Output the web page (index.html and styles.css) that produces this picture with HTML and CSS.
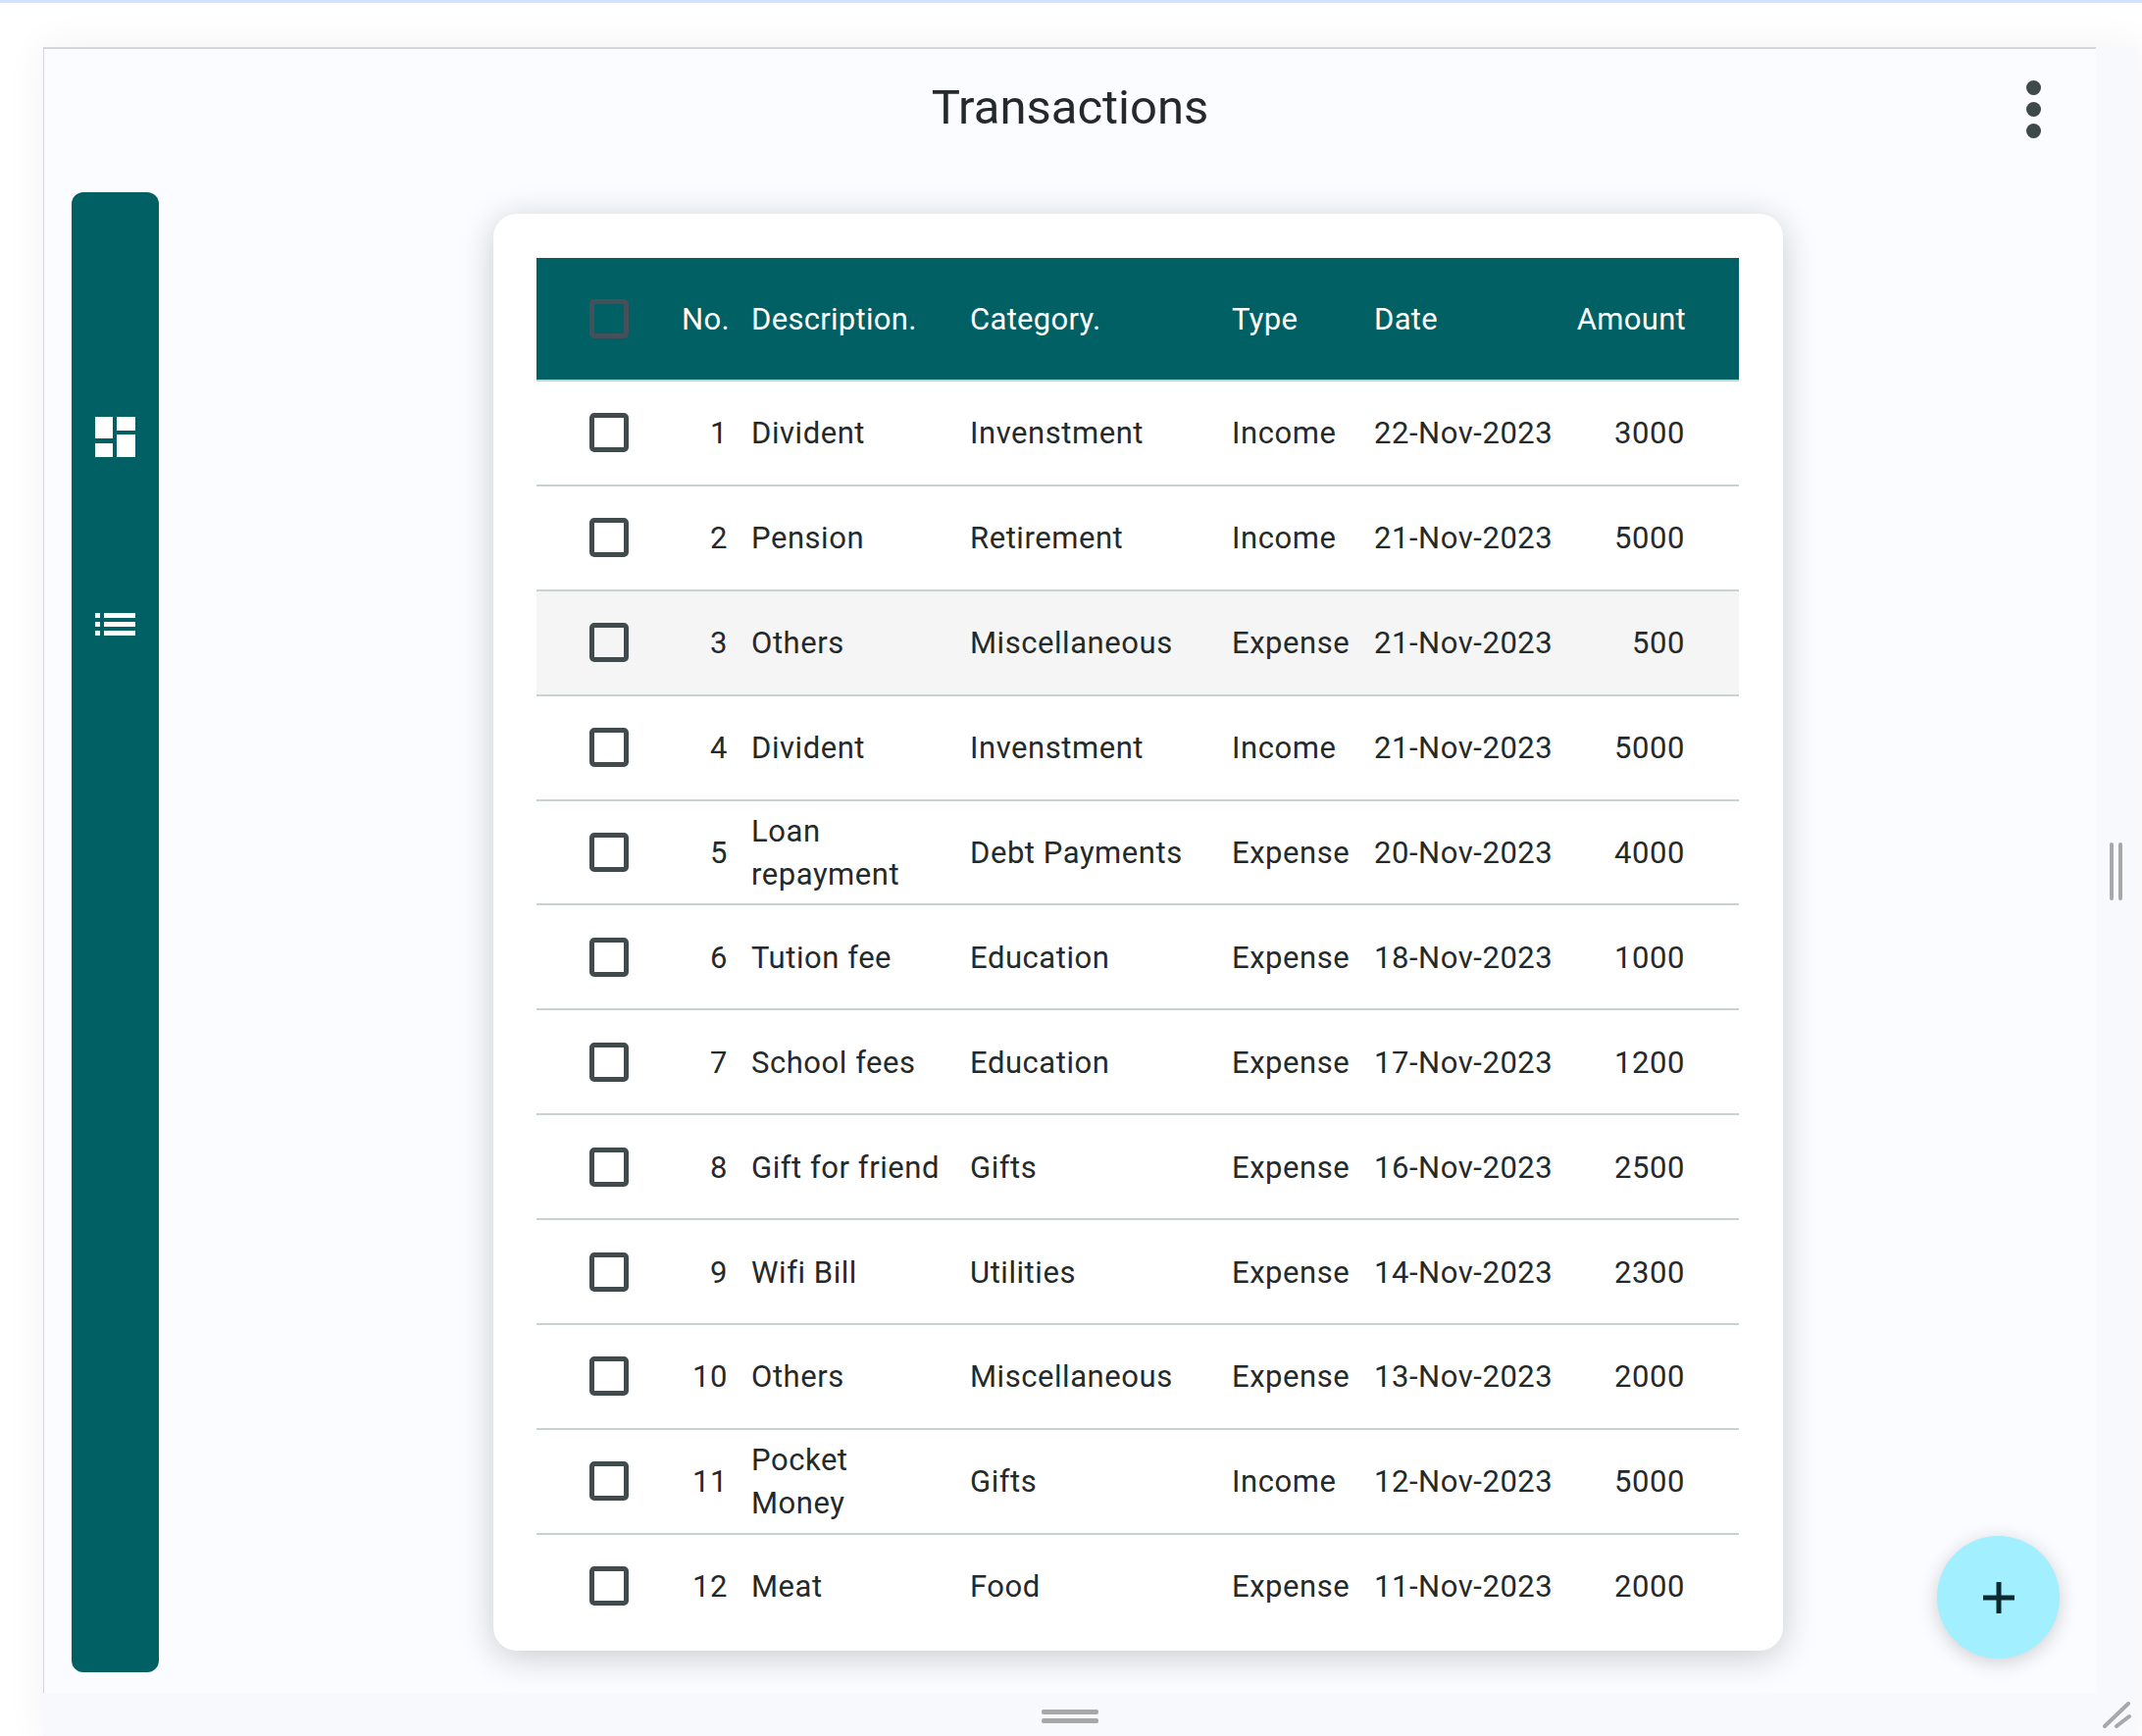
FILE: index.html
```html
<!DOCTYPE html>
<html lang="en">
<head>
  <meta charset="UTF-8">
  <title>Transactions</title>
  <link rel="stylesheet" href="styles.css">
</head>
<body>
  <div class="topline"></div>
  <div class="shell">
    <div class="window">
      <header class="appbar">
        <h1>Transactions</h1>
        <div class="more"><span></span><span></span><span></span></div>
      </header>
      <div class="content">
        <nav class="rail">
          <svg class="rail-icon icon-dash" viewBox="0 0 41 41" width="41" height="41"><path d="M0 0h18v22H0zM22 0h19v14H22zM22 18h19v23H22zM0 27h18v14H0z" fill="#fff"/></svg>
          <svg class="rail-icon icon-list" viewBox="0 0 41 23" width="41" height="23"><path d="M0 0h5v5H0zM9 0h32v5H9zM0 9h5v5H0zM9 9h32v5H9zM0 18h5v5H0zM9 18h32v5H9z" fill="#fff"/></svg>
        </nav>
        <main class="card">
          <table>
            <colgroup>
              <col class="c-check"><col class="c-no"><col class="c-desc"><col class="c-cat"><col class="c-type"><col class="c-date"><col class="c-amount">
            </colgroup>
            <thead>
              <tr>
                <th><span class="check check-head"></span></th>
                <th class="num">No.</th>
                <th>Description.</th>
                <th>Category.</th>
                <th>Type</th>
                <th>Date</th>
                <th class="num">Amount</th>
              </tr>
            </thead>
            <tbody>
              <tr><td><span class="check"></span></td><td class="num">1</td><td>Divident</td><td>Invenstment</td><td>Income</td><td>22-Nov-2023</td><td class="num">3000</td></tr>
              <tr><td><span class="check"></span></td><td class="num">2</td><td>Pension</td><td>Retirement</td><td>Income</td><td>21-Nov-2023</td><td class="num">5000</td></tr>
              <tr class="hover"><td><span class="check"></span></td><td class="num">3</td><td>Others</td><td>Miscellaneous</td><td>Expense</td><td>21-Nov-2023</td><td class="num">500</td></tr>
              <tr><td><span class="check"></span></td><td class="num">4</td><td>Divident</td><td>Invenstment</td><td>Income</td><td>21-Nov-2023</td><td class="num">5000</td></tr>
              <tr><td><span class="check"></span></td><td class="num">5</td><td>Loan repayment</td><td>Debt Payments</td><td>Expense</td><td>20-Nov-2023</td><td class="num">4000</td></tr>
              <tr><td><span class="check"></span></td><td class="num">6</td><td>Tution fee</td><td>Education</td><td>Expense</td><td>18-Nov-2023</td><td class="num">1000</td></tr>
              <tr><td><span class="check"></span></td><td class="num">7</td><td>School fees</td><td>Education</td><td>Expense</td><td>17-Nov-2023</td><td class="num">1200</td></tr>
              <tr><td><span class="check"></span></td><td class="num">8</td><td>Gift for friend</td><td>Gifts</td><td>Expense</td><td>16-Nov-2023</td><td class="num">2500</td></tr>
              <tr><td><span class="check"></span></td><td class="num">9</td><td>Wifi Bill</td><td>Utilities</td><td>Expense</td><td>14-Nov-2023</td><td class="num">2300</td></tr>
              <tr><td><span class="check"></span></td><td class="num">10</td><td>Others</td><td>Miscellaneous</td><td>Expense</td><td>13-Nov-2023</td><td class="num">2000</td></tr>
              <tr><td><span class="check"></span></td><td class="num">11</td><td>Pocket Money</td><td>Gifts</td><td>Income</td><td>12-Nov-2023</td><td class="num">5000</td></tr>
              <tr><td><span class="check"></span></td><td class="num">12</td><td>Meat</td><td>Food</td><td>Expense</td><td>11-Nov-2023</td><td class="num">2000</td></tr>
            </tbody>
          </table>
        </main>
      </div>
      <button class="fab" type="button">
        <svg viewBox="0 0 32 32" width="32" height="32"><path d="M13.500 0h5v13.500H32v5H18.500V32h-5V18.500H0v-5h13.500z" fill="#0a2a30"/></svg>
      </button>
    </div>
    <span class="grip-right"></span>
    <span class="grip-bottom"></span>
    <svg class="grip-corner" viewBox="0 0 30 28" width="30" height="28"><path d="M3 25L27 2M15 25L28 15" stroke="#a8a8a8" stroke-width="4" stroke-linecap="round" fill="none"/></svg>
  </div>
</body>
</html>
```
FILE: styles.css
```css
body {
  margin: 0;
  width: 2184px;
  height: 1770px;
  overflow: hidden;
  background-color: #fff;
  font-family: Roboto, "Liberation Sans", sans-serif;
  color: #24292a;
}

.topline {
  height: 3px;
  background-color: #d3e3fd;
}

.shell {
  position: relative;
  width: 2136px;
  height: 1722px;
  margin: 45px 0 0 44px;
  background-color: #f8f9fc;
  box-shadow: 0 0 40px rgba(0, 0, 0, 0.06);
}

.window {
  position: relative;
  box-sizing: border-box;
  width: 2093px;
  height: 1678px;
  background-color: #fbfcff;
  border-top: 2px solid #d4d6d9;
  border-left: 1px solid #d4d6d9;
}

.appbar {
  position: relative;
  height: 146px;
}

.appbar h1 {
  margin: 0;
  padding-top: 32px;
  font-size: 49px;
  line-height: 56px;
  font-weight: 400;
  text-align: center;
}

.more {
  position: absolute;
  top: 32px;
  right: 56px;
  display: flex;
  flex-direction: column;
  gap: 7px;
}

.more span {
  width: 15px;
  height: 15px;
  border-radius: 50%;
  background-color: #3f484a;
}

.content {
  display: flex;
  align-items: flex-start;
}

.rail {
  box-sizing: border-box;
  display: flex;
  flex-direction: column;
  align-items: center;
  width: 89px;
  height: 1509px;
  margin-left: 28px;
  padding-top: 229px;
  background-color: #006064;
  border-radius: 12px;
}

.icon-list {
  margin-top: 159px;
}

.card {
  box-sizing: border-box;
  width: 1315px;
  height: 1465px;
  margin: 22px 0 0 341px;
  padding: 45px 45px 12px 44px;
  background-color: #fff;
  border-radius: 24px;
  box-shadow: 0 6px 36px rgba(0, 0, 0, 0.2);
}

table {
  width: 1226px;
  border-collapse: collapse;
  table-layout: fixed;
  font-size: 31px;
  letter-spacing: 0.55px;
}

.c-check { width: 148px; }
.c-no { width: 71px; }
.c-desc { width: 223px; }
.c-cat { width: 267px; }
.c-type { width: 145px; }
.c-date { width: 205px; }
.c-amount { width: 167px; }

th, td {
  padding: 2px 24px 0 0;
  text-align: left;
  font-weight: 400;
  line-height: 44px;
  vertical-align: middle;
}

th:first-child, td:first-child {
  padding: 0 0 0 54px;
}

th:nth-child(6), td:nth-child(6) {
  padding-right: 16px;
}

td:last-child {
  padding-right: 55px;
}

th:last-child {
  padding-right: 54px;
}

th {
  height: 122px;
  background-color: #006064;
  color: #fff;
  letter-spacing: 0.3px;
  border-bottom: 2px solid #c9d1d3;
}

td {
  height: 102.9px;
  border-bottom: 2px solid #c9d1d3;
}

tbody tr:last-child td {
  border-bottom: none;
}

.hover td {
  background-color: #f5f5f5;
}

.num {
  text-align: right;
}

.check {
  display: block;
  box-sizing: border-box;
  width: 40px;
  height: 40px;
  border: 5px solid #414b4e;
  border-radius: 5px;
}

.check-head {
  border-color: #45505a;
}

.fab {
  position: absolute;
  left: 1930px;
  top: 1516px;
  display: flex;
  align-items: center;
  justify-content: center;
  width: 125px;
  height: 125px;
  padding: 0;
  border: none;
  border-radius: 50%;
  background-color: #a2efff;
  box-shadow: 0 4px 20px rgba(0, 0, 0, 0.18);
}

.grip-right {
  position: absolute;
  left: 2107px;
  top: 811px;
  width: 4px;
  height: 59px;
  border-radius: 2px;
  background-color: #a8a8a8;
  box-shadow: 9px 0 0 #a8a8a8;
}

.grip-bottom {
  position: absolute;
  left: 1018px;
  top: 1695px;
  width: 58px;
  height: 5px;
  border-radius: 2px;
  background-color: #a8a8a8;
  box-shadow: 0 9px 0 #a8a8a8;
}

.grip-corner {
  position: absolute;
  left: 2099px;
  top: 1687px;
}
```
